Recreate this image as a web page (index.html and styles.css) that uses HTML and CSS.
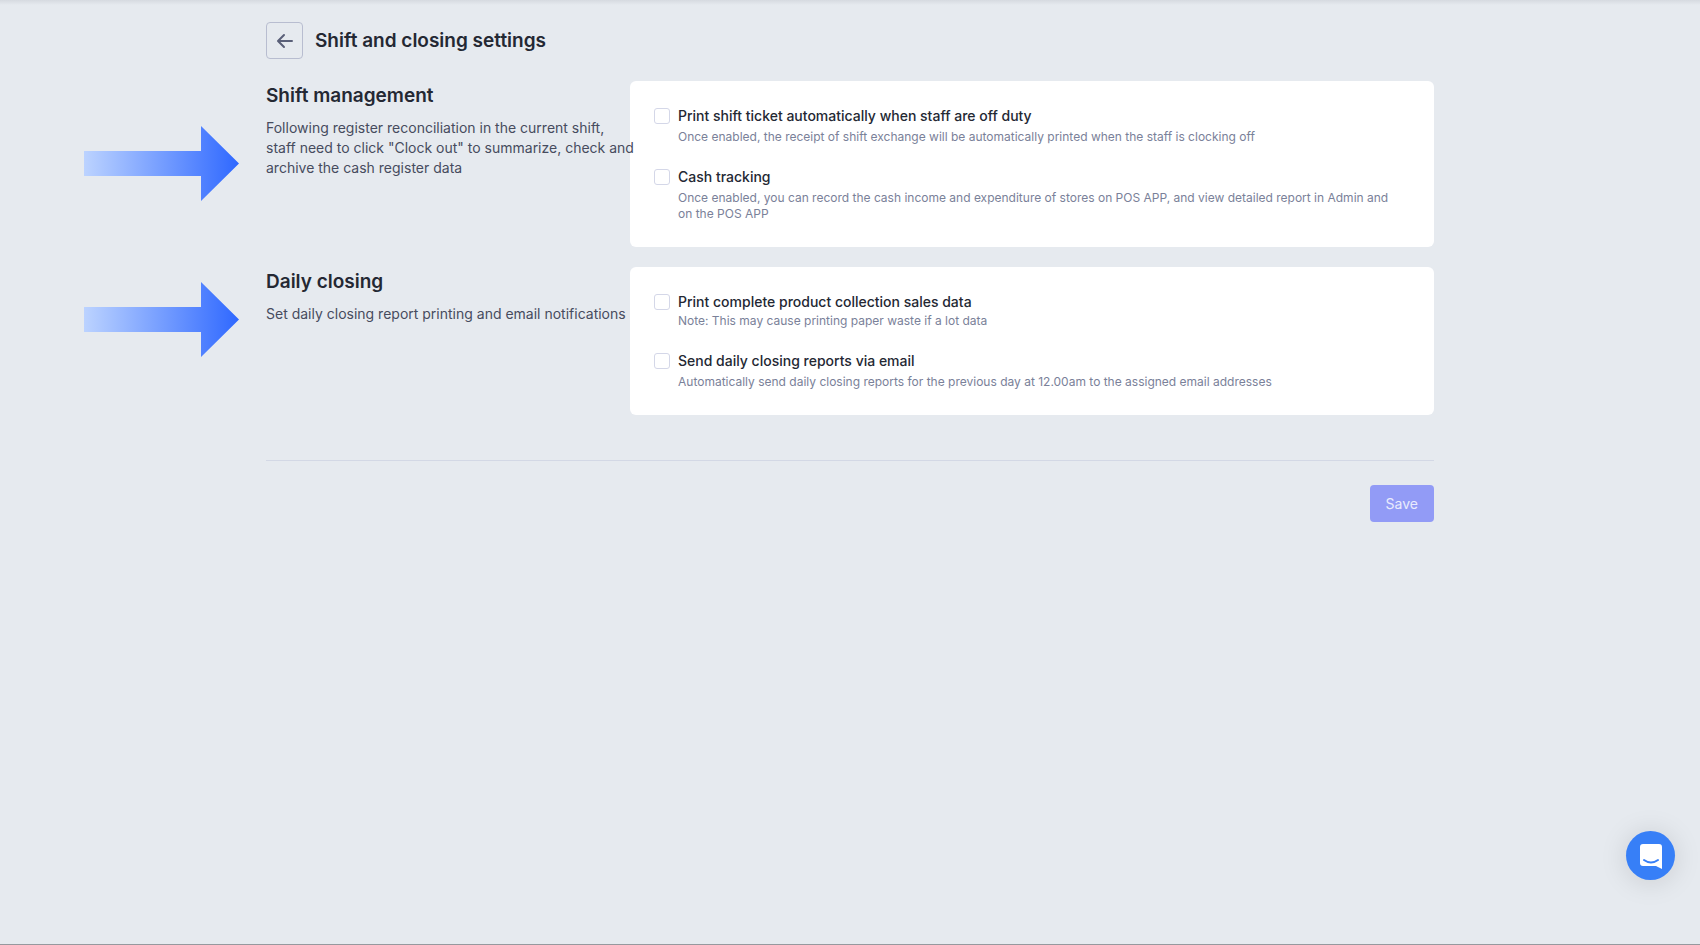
FILE: index.html
```html
<!DOCTYPE html>
<html lang="en">
<head>
<meta charset="utf-8">
<meta name="viewport" content="width=device-width, initial-scale=1">
<title>Shift and closing settings</title>
<link rel="stylesheet" href="styles.css">
</head>
<body>
<svg class="defs" width="0" height="0" aria-hidden="true">
  <defs>
    <linearGradient id="arrow-fill" x1="0" y1="0" x2="1" y2="0">
      <stop offset="0" stop-color="#bcd3ff"/>
      <stop offset="1" stop-color="#2f68ff"/>
    </linearGradient>
    <symbol id="arrow" viewBox="0 0 155 75">
      <path d="M0 25H117V0L155 37.500L117 75V50H0Z" fill="url(#arrow-fill)"/>
    </symbol>
  </defs>
</svg>
<main class="page">
  <header class="page-header">
    <button class="back" type="button" aria-label="Back">
      <svg width="18" height="18" viewBox="0 0 18 18" fill="none" stroke="#5a6079" stroke-width="2" stroke-linecap="round" stroke-linejoin="round"><path d="M16 9H2.500M8 3L2 9L8 15"/></svg>
    </button>
    <h1 class="heading">Shift and closing settings</h1>
  </header>

  <section class="row">
    <svg class="pointer pointer-low" width="155" height="75" aria-hidden="true"><use href="#arrow"/></svg>
    <div class="intro">
      <h2 class="heading">Shift management</h2>
      <p class="lead">Following register reconciliation in the current shift,<br>staff need to click "Clock out" to summarize, check and<br>archive the cash register data</p>
    </div>
    <div class="card">
      <div class="option">
        <input class="check" type="checkbox" id="print-ticket">
        <div class="option-text">
          <label class="option-title" for="print-ticket">Print shift ticket automatically when staff are off duty</label>
          <p class="hint">Once enabled, the receipt of shift exchange will be automatically printed when the staff is clocking off</p>
        </div>
      </div>
      <div class="option">
        <input class="check" type="checkbox" id="cash-tracking">
        <div class="option-text">
          <label class="option-title" for="cash-tracking">Cash tracking</label>
          <p class="hint">Once enabled, you can record the cash income and expenditure of stores on POS APP, and view detailed report in Admin and on the POS APP</p>
        </div>
      </div>
    </div>
  </section>

  <section class="row">
    <svg class="pointer" width="155" height="75" aria-hidden="true"><use href="#arrow"/></svg>
    <div class="intro">
      <h2 class="heading">Daily closing</h2>
      <p class="lead">Set daily closing report printing and email notifications</p>
    </div>
    <div class="card">
      <div class="option">
        <input class="check" type="checkbox" id="print-sales">
        <div class="option-text option-text-tight">
          <label class="option-title" for="print-sales">Print complete product collection sales data</label>
          <p class="hint">Note: This may cause printing paper waste if a lot data</p>
        </div>
      </div>
      <div class="option">
        <input class="check" type="checkbox" id="send-email">
        <div class="option-text">
          <label class="option-title" for="send-email">Send daily closing reports via email</label>
          <p class="hint">Automatically send daily closing reports for the previous day at 12.00am to the assigned email addresses</p>
        </div>
      </div>
    </div>
  </section>

  <footer class="actions">
    <button class="save" type="button">Save</button>
  </footer>
</main>
<button class="chat" type="button" aria-label="Open chat">
  <svg width="22" height="26" viewBox="0 0 22 26" fill="none"><path d="M3 1H19Q22 1 22 4V26L16 23H3Q0 23 0 20V4Q0 1 3 1Z" fill="#fff"/><path d="M4 17Q11 22 18 17" stroke="#377ff7" stroke-width="2" stroke-linecap="round"/></svg>
</button>
</body>
</html>
```
FILE: styles.css
```css
* {
  box-sizing: border-box;
}

body {
  margin: 0;
  min-height: 100vh;
  background: #e6eaef linear-gradient(#d6dae0, #e6eaef) 0 0 / 100% 5px no-repeat;
  border-bottom: 1px solid #96999e;
  color: #242833;
  font-family: Inter, "Liberation Sans", sans-serif;
  font-size: 14px;
  line-height: 20px;
}

h1,
h2,
p {
  margin: 0;
}

.defs {
  position: absolute;
}

.page {
  max-width: 1168px;
  margin: 0 auto;
  padding-top: 22px;
}

.page-header {
  display: flex;
  align-items: center;
  gap: 12px;
  margin-bottom: 22px;
}

.back {
  display: flex;
  align-items: center;
  justify-content: center;
  width: 37px;
  height: 37px;
  padding: 0;
  border: 1px solid #b8bdd0;
  border-radius: 4px;
  background: transparent;
}

.heading {
  font-size: 19px;
  font-weight: 600;
  line-height: 30px;
}

.row {
  position: relative;
  display: grid;
  grid-template-columns: 364px 1fr;
  margin-bottom: 20px;
}

.pointer {
  position: absolute;
  top: 15px;
  right: calc(100% + 27px);
}

.pointer-low {
  top: 45px;
}

.intro {
  z-index: 1;
}

.lead {
  margin-top: 7px;
  color: #474c5e;
  white-space: nowrap;
}

.card {
  display: flex;
  flex-direction: column;
  gap: 22px;
  padding: 25px 32px 25px 24px;
  border-radius: 6px;
  background: #fff;
}

.option {
  display: flex;
  gap: 8px;
}

.check {
  flex: none;
  appearance: none;
  width: 16px;
  height: 16px;
  margin: 2px 0 0;
  border: 1px solid #d4d7e8;
  border-radius: 3px;
  background: #fff;
}

.option-text {
  display: flex;
  flex-direction: column;
  gap: 3px;
}

.option-text-tight {
  gap: 1px;
}

.option-title {
  font-weight: 500;
}

.hint {
  color: #7a8199;
  font-size: 12px;
  line-height: 16px;
}

.actions {
  display: flex;
  justify-content: flex-end;
  margin-top: 45px;
  padding-top: 24px;
  border-top: 1px solid #d3d8e5;
}

.save {
  height: 37px;
  padding: 0 16px;
  border: 0;
  border-radius: 4px;
  background: #929bf6;
  color: #e9ebfd;
  font: inherit;
}

.chat {
  position: fixed;
  right: 25px;
  bottom: 65px;
  display: flex;
  align-items: center;
  justify-content: center;
  width: 49px;
  height: 49px;
  padding: 0;
  border: 0;
  border-radius: 50%;
  background: #377ff7;
  box-shadow: 0 2px 28px rgba(0, 0, 0, 0.13);
}
```
